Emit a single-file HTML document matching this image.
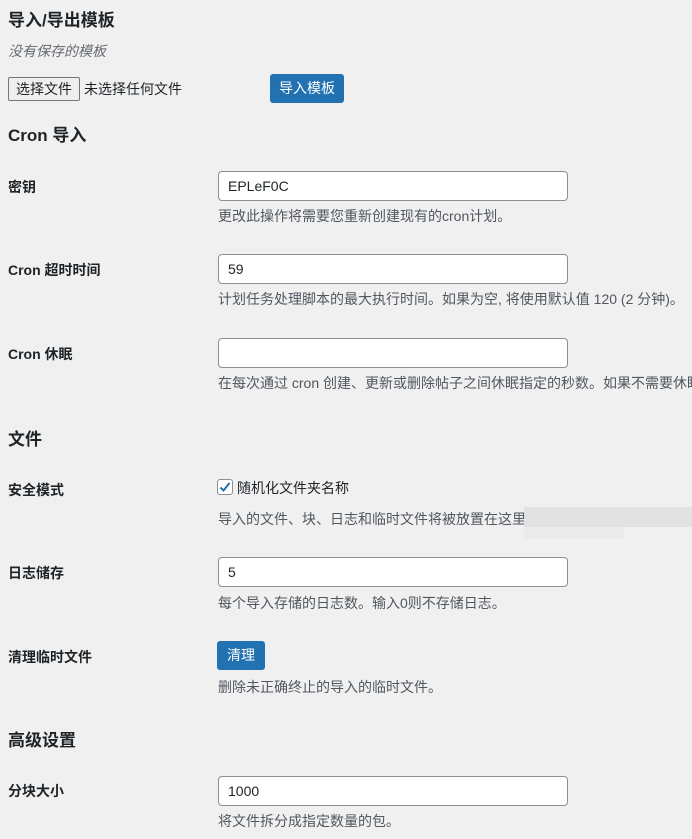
<!DOCTYPE html>
<html><head><meta charset="utf-8"><style>
body{margin:0;width:692px;height:839px;background:#f0f0f1;font-family:"Liberation Sans","Noto Sans CJK SC",sans-serif;color:#1d2327;position:relative;overflow:hidden;font-size:14px}
.a{position:absolute;white-space:nowrap}
h2{position:absolute;margin:0;font-size:17px;font-weight:600;white-space:nowrap}
.lab{position:absolute;left:8px;font-size:14px;font-weight:600;white-space:nowrap}
.inp{position:absolute;left:218px;width:348px;height:28px;background:#fff;border:1px solid #8c8f94;border-radius:4px;font-size:14px;line-height:28px;box-sizing:content-box}
.inp span{padding-left:9px}
.d{position:absolute;left:218px;font-size:14px;color:#50575e;white-space:nowrap}
.btn{position:absolute;background:#2271b1;color:#fff;border-radius:3px;font-size:14px;text-align:center}
</style></head><body>
<h2 style="left:8px;top:6px">导入/导出模板</h2>
<div class="a" style="left:8px;top:41px;font-style:italic;color:#646970">没有保存的模板</div>
<div class="a" style="left:8px;top:77px;width:70px;height:22px;border:1px solid #767676;border-radius:2px;background:#efefef;text-align:center;line-height:22px">选择文件</div>
<div class="a" style="left:84px;top:79px">未选择任何文件</div>
<div class="btn" style="left:270px;top:74px;width:74px;height:29px;line-height:29px">导入模板</div>
<h2 style="left:8px;top:121px">Cron 导入</h2>

<div class="lab" style="top:177px">密钥</div>
<div class="inp" style="top:171px"><span>EPLeF0C</span></div>
<div class="d" style="top:206px">更改此操作将需要您重新创建现有的cron计划。</div>

<div class="lab" style="top:260px">Cron 超时时间</div>
<div class="inp" style="top:254px"><span>59</span></div>
<div class="d" style="top:289px">计划任务处理脚本的最大执行时间。如果为空, 将使用默认值 120 (2 分钟)。</div>

<div class="lab" style="top:344px">Cron 休眠</div>
<div class="inp" style="top:338px"></div>
<div class="d" style="top:373px">在每次通过 cron 创建、更新或删除帖子之间休眠指定的秒数。如果不需要休眠</div>

<h2 style="left:8px;top:425px">文件</h2>
<div class="lab" style="top:480px">安全模式</div>
<div class="a" style="left:217px;top:479px;width:14px;height:14px;border:1px solid #8c8f94;border-radius:3px;background:#fff"><svg width="14" height="14" viewBox="0 0 14 14"><path d="M2.5 7.5 L5.5 10.5 L11.5 3" stroke="#2271b1" stroke-width="2" fill="none"/></svg></div>
<div class="a" style="left:237px;top:478px">随机化文件夹名称</div>
<div class="d" style="top:509px">导入的文件、块、日志和临时文件将被放置在这里</div>
<div class="a" style="left:524px;top:507px;width:168px;height:20px;background:#e2e2e2"></div>
<div class="a" style="left:524px;top:527px;width:100px;height:12px;background:#ebebeb"></div>

<div class="lab" style="top:563px">日志储存</div>
<div class="inp" style="top:557px"><span>5</span></div>
<div class="d" style="top:593px">每个导入存储的日志数。输入0则不存储日志。</div>

<div class="lab" style="top:647px">清理临时文件</div>
<div class="btn" style="left:217px;top:641px;width:48px;height:29px;line-height:29px">清理</div>
<div class="d" style="top:677px">删除未正确终止的导入的临时文件。</div>

<h2 style="left:8px;top:726px">高级设置</h2>
<div class="lab" style="top:781px">分块大小</div>
<div class="inp" style="top:776px"><span>1000</span></div>
<div class="d" style="top:811px">将文件拆分成指定数量的包。</div>
</body></html>
